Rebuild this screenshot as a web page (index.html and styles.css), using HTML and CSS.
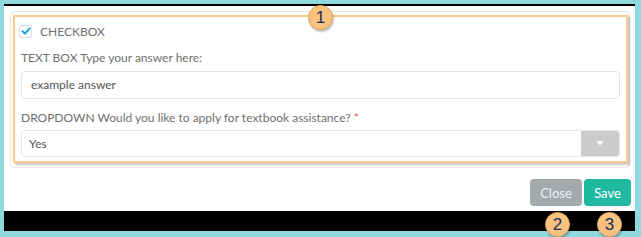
FILE: index.html
```html
<!DOCTYPE html>
<html lang="en">

<head>
    <meta charset="UTF-8">
    <title>Form modal</title>
    <link rel="stylesheet" href="styles.css">
</head>

<body>
    <div class="window">
        <div class="modal">
            <div class="panel">
                <div class="highlight">
                    <div class="check-row">
                        <span class="checkbox">
                            <svg width="10" height="10" viewBox="0 0 10 10">
                                <path d="M1.5 5.2 L4 7.5 L8.6 2.6" fill="none" stroke="#1a9fd9" stroke-width="2" stroke-linecap="round" stroke-linejoin="round"/>
                            </svg>
                        </span>
                        <span>CHECKBOX</span>
                    </div>

                    <label class="field-label">TEXT BOX Type your answer here:</label>
                    <div class="input">example answer</div>

                    <label class="field-label dd-label">DROPDOWN Would you like to apply for textbook assistance? <span class="req">*</span></label>
                    <div class="select">
                        <span class="select-value">Yes</span>
                        <span class="caret-btn">
                            <svg width="8" height="5" viewBox="0 0 8 5">
                                <path d="M0 0 L8 0 L4 4.5 Z" fill="#fff"/>
                            </svg>
                        </span>
                    </div>
                </div>
            </div>

            <div class="footer">
                <button class="btn btn-close">Close</button>
                <button class="btn btn-save">Save</button>
            </div>
        </div>
        <div class="bar"></div>

        <span class="badge badge-1">1</span>
        <span class="badge badge-2">2</span>
        <span class="badge badge-3">3</span>
    </div>
</body>

</html>
```

FILE: styles.css
```css
html, body {
    margin: 0;
}

body {
    background: #8ed9de;
    padding: 4px 6px 6px 4px;
    font-family: Lato, "Liberation Sans", sans-serif;
    font-size: 12px;
    color: #6f6f6f;
}

.window {
    position: relative;
    width: 631px;
}

.modal {
    background: #fff;
    border-top: 2px solid #000;
    height: 207px;
    padding: 5px 5px 0 6px;
    box-sizing: border-box;
}

.panel {
    border: 1px solid #e8e8e8;
    border-radius: 4px;
    padding: 3px 1px 4px 2px;
}

.highlight {
    border: 2px solid #fbc88c;
    box-shadow: 2px 2px 2px rgba(0, 0, 0, .22);
    padding: 5px 6px 4px 6px;
}

.check-row {
    display: flex;
    align-items: center;
    height: 18px;
    margin-left: -2px;
}

.checkbox {
    width: 11px;
    height: 11px;
    border: 1px solid #dcdcdc;
    border-radius: 2px;
    display: flex;
    align-items: center;
    justify-content: center;
    margin-right: 8px;
}

.field-label {
    display: block;
    line-height: 18px;
    margin-top: 9px;
}

.dd-label {
    margin-top: 10px;
}

.req {
    color: #e05555;
}

.input {
    margin-top: 4px;
    height: 28px;
    line-height: 26px;
    border: 1px solid #e3e3e3;
    border-radius: 4px;
    padding-left: 9px;
    box-sizing: border-box;
    color: #555;
}

.select {
    margin-top: 3px;
    height: 27px;
    border: 1px solid #e6e6e6;
    border-radius: 4px;
    display: flex;
    box-sizing: border-box;
    color: #555;
}

.select-value {
    flex: 1;
    line-height: 25px;
    padding-left: 7px;
}

.caret-btn {
    width: 38px;
    background: #cbcbcb;
    border-radius: 0 3px 3px 0;
    display: flex;
    align-items: center;
    justify-content: center;
}

.footer {
    display: flex;
    justify-content: flex-end;
    gap: 2px;
    margin-top: 11px;
    margin-right: -1px;
}

.btn {
    height: 27px;
    border: none;
    border-radius: 4px;
    font-family: Lato, "Liberation Sans", sans-serif;
    font-size: 13px;
    padding: 0;
}

.btn-close {
    width: 52px;
    background: #a4a9ac;
    color: #eef0f1;
}

.btn-save {
    width: 47px;
    background: #1fb8a0;
    color: #fff;
}

.bar {
    height: 20px;
    background: #000;
}

.badge {
    position: absolute;
    width: 23px;
    height: 23px;
    border: 1px solid #e4a45c;
    border-radius: 50%;
    background: #f9c27e;
    box-shadow: 1px 2px 2px rgba(0, 0, 0, .25);
    color: #1c2d5c;
    font-family: "Liberation Sans", Arial, sans-serif;
    font-size: 17px;
    line-height: 23px;
    text-align: center;
}

.badge-1 {
    left: 304px;
    top: 1px;
}

.badge-2 {
    left: 541px;
    top: 208px;
}

.badge-3 {
    left: 593px;
    top: 208px;
}
```
